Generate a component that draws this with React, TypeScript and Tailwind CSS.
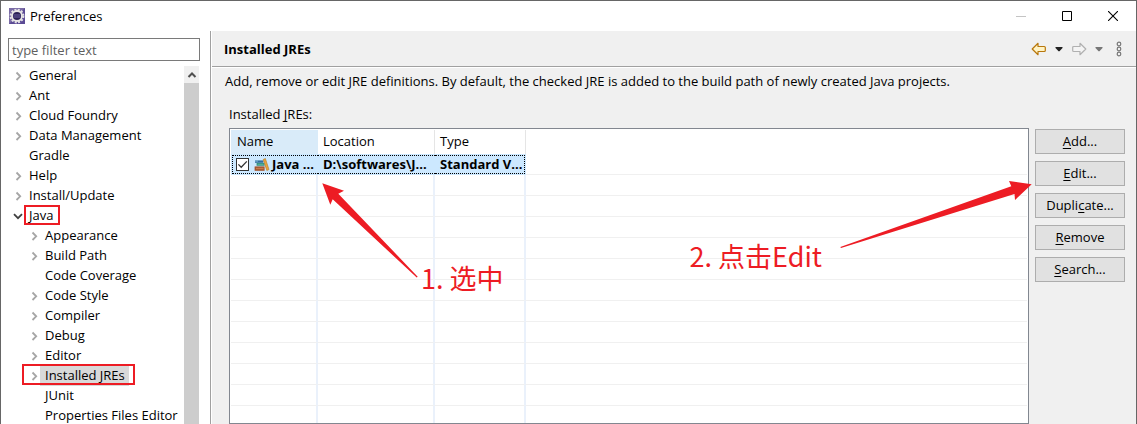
import { useState } from "react";

type Node = {
  label: string;
  level: 0 | 1;
  state: "closed" | "open" | "leaf";
  mark?: "java" | "jres";
};

const NODES: Node[] = [
  { label: "General", level: 0, state: "closed" },
  { label: "Ant", level: 0, state: "closed" },
  { label: "Cloud Foundry", level: 0, state: "closed" },
  { label: "Data Management", level: 0, state: "closed" },
  { label: "Gradle", level: 0, state: "leaf" },
  { label: "Help", level: 0, state: "closed" },
  { label: "Install/Update", level: 0, state: "closed" },
  { label: "Java", level: 0, state: "open", mark: "java" },
  { label: "Appearance", level: 1, state: "closed" },
  { label: "Build Path", level: 1, state: "closed" },
  { label: "Code Coverage", level: 1, state: "leaf" },
  { label: "Code Style", level: 1, state: "closed" },
  { label: "Compiler", level: 1, state: "closed" },
  { label: "Debug", level: 1, state: "closed" },
  { label: "Editor", level: 1, state: "closed" },
  { label: "Installed JREs", level: 1, state: "closed", mark: "jres" },
  { label: "JUnit", level: 1, state: "leaf" },
  { label: "Properties Files Editor", level: 1, state: "leaf" },
];

const BUTTONS = [
  ["", "A", "dd..."],
  ["", "E", "dit..."],
  ["Dupli", "c", "ate..."],
  ["", "R", "emove"],
  ["", "S", "earch..."],
];

const EMPTY_ROWS = Array.from({ length: 13 }, (_, i) => i);

function AppIcon() {
  return (
    <svg width="16" height="16" viewBox="0 0 16 16" aria-hidden="true">
      <rect width="16" height="16" fill="#5b4a94" />
      <path d="M0 0h16L0 16z" fill="#7b6ca6" />
      <circle cx="8" cy="8" r="6.4" fill="none" stroke="#e4e2e6" strokeWidth="2" strokeDasharray="2 1.35" />
      <circle cx="8" cy="8" r="5" fill="#2c2255" stroke="#e9e7e4" strokeWidth="1.8" />
      <path d="M4.4 7h7.2M4.4 9h7.2" stroke="#6a60a0" strokeWidth="1" />
    </svg>
  );
}

function Twisty({ state }: { state: Node["state"] }) {
  return (
    <svg className="shrink-0" width="12" height="12" viewBox="0 0 12 12" fill="none" aria-hidden="true">
      {state === "closed" && <path d="M4.5 2.5L8.2 6.3L4.5 10" stroke="#a6a6a6" strokeWidth="1.8" />}
      {state === "open" && <path d="M2 4.2L6 8.2L10 4.2" stroke="#404040" strokeWidth="1.8" />}
    </svg>
  );
}

function BooksIcon() {
  return (
    <svg className="shrink-0" width="16" height="14" viewBox="0 0 16 14" aria-hidden="true">
      <path d="M1 2.4h8.4v2.4H1z" fill="#2f6f9f" />
      <path d="M1 2.4h3v1.2H1z" fill="#7db4d4" />
      <path d="M2.6 5h8v2.8h-8z" fill="#2f8f7c" />
      <path d="M3.6 5.8h6v1h-6z" fill="#5fb8a0" />
      <path d="M.6 8.4h10v4.4H.6z" fill="#a0552f" />
      <path d="M2 9.8h7.6v1.4H2z" fill="#c87c4c" />
      <path d="M9.2 1.4l2.2-.8 3.6 11-2.2.9z" fill="#e8a640" stroke="#b87820" strokeWidth=".6" />
    </svg>
  );
}

function BackIcon() {
  return (
    <svg width="16" height="16" viewBox="0 0 16 16" aria-hidden="true">
      <path d="M1.2 8L7 2.3v3.2h6.3q1 0 1 1v3q0 1-1 1H7v3.2z" fill="#fff3c4" stroke="#b8770c" strokeWidth="1.2" strokeLinejoin="round" />
    </svg>
  );
}

function ForwardIcon() {
  return (
    <svg width="16" height="16" viewBox="0 0 16 16" aria-hidden="true">
      <path d="M14.8 8L9 2.3v3.2H2.7q-1 0-1 1v3q0 1 1 1H9v3.2z" fill="#f4f4f4" stroke="#b0b0b0" strokeWidth="1.2" strokeLinejoin="round" />
    </svg>
  );
}

function Caret({ className }: { className: string }) {
  return (
    <svg className={className} width="8" height="16" viewBox="0 0 8 16" aria-hidden="true">
      <path d="M0.5 6h7v1L4.5 10.2h-1L.5 7z" fill="currentColor" />
    </svg>
  );
}

function TreeRow({ node }: { node: Node }) {
  return (
    <li
      role="treeitem"
      aria-expanded={node.state === "leaf" ? undefined : node.state === "open"}
      aria-selected={node.mark === "jres"}
      className={`relative flex h-5 items-center ${node.level === 1 ? "pl-5" : "pl-1"}`}
    >
      <Twisty state={node.state} />
      <span className={`h-5 pr-1 pl-[5px] leading-[18px] whitespace-nowrap ${node.mark === "jres" ? "bg-[#d9d9d9]" : ""}`}>
        {node.label}
      </span>
      {node.mark === "java" && <span className="absolute -top-px left-4 h-5 w-9 border-2 border-[#ed1c24]" />}
      {node.mark === "jres" && <span className="absolute -top-0.5 left-3.5 h-[21px] w-[113px] border-2 border-[#ed1c24]" />}
    </li>
  );
}

function Sidebar() {
  return (
    <aside className="flex w-[210px] shrink-0 flex-col border-r border-[#a0a0a0] pt-[7px] pr-2.5 pl-[7px]">
      <input
        aria-label="Filter preferences"
        placeholder="type filter text"
        className="h-[23px] w-full shrink-0 border border-[#7a7a7a] bg-white px-[3px] leading-5 outline-none placeholder:text-[#5f5f5f]"
      />
      <div className="mt-[5px] flex min-h-0 flex-1 overflow-hidden">
        <ul role="tree" aria-label="Preference pages" className="min-w-0 flex-1">
          {NODES.map((n) => (
            <TreeRow key={n.label} node={n} />
          ))}
        </ul>
        <div className="flex w-4 shrink-0 flex-col pr-px">
          <button type="button" aria-label="Scroll up" className="flex h-[17px] shrink-0 items-center justify-center bg-[#f0f0f0]">
            <svg width="10" height="8" viewBox="0 0 10 8" fill="none" aria-hidden="true">
              <path d="M1.5 6L5 2.5L8.5 6" stroke="#505050" strokeWidth="2" />
            </svg>
          </button>
          <div className="flex-1 bg-[#cdcdcd]" />
        </div>
      </div>
    </aside>
  );
}

function JreTable() {
  const [checked, setChecked] = useState(true);
  return (
    <div className="h-full overflow-hidden border border-[#828790] bg-white p-px">
      <table className="w-full table-fixed border-separate border-spacing-0 text-left" aria-labelledby="jres-label">
        <colgroup>
          <col className="w-[87px]" />
          <col className="w-[117px]" />
          <col className="w-[91px]" />
          <col />
        </colgroup>
        <thead>
          <tr className="h-6 leading-[18px]">
            <th className="bg-[#d9ebf9] p-0 pb-0.5 pl-1.5 font-normal">Name</th>
            <th className="border-r border-[#e5e5e5] p-0 pb-0.5 pl-[5px] font-normal">Location</th>
            <th className="border-r border-[#e5e5e5] p-0 pb-0.5 pl-[5px] font-normal">Type</th>
            <th className="p-0" />
          </tr>
        </thead>
        <tbody>
          <tr className="h-[21px] leading-[18px] font-bold">
            <td className="bg-[#cce8ff] p-0 pl-px">
              <div className="flex h-[19px] items-center border-y border-l border-dotted border-black pl-[3px]">
                <span className="relative flex">
                  <input
                    type="checkbox"
                    aria-label="Java"
                    checked={checked}
                    onChange={(e) => setChecked(e.target.checked)}
                    className="h-[13px] w-[13px] appearance-none border border-[#333333] bg-white"
                  />
                  {checked && (
                    <svg className="pointer-events-none absolute inset-0" width="13" height="13" viewBox="0 0 13 13" fill="none" aria-hidden="true">
                      <path d="M2.4 6.4L5.2 9.2L10.8 3.4" stroke="#333" strokeWidth="1.3" />
                    </svg>
                  )}
                </span>
                <span className="ml-[5px] flex">
                  <BooksIcon />
                </span>
                <span className="ml-0.5 pb-0.5 whitespace-nowrap">Java ...</span>
              </div>
            </td>
            <td className="bg-[#cce8ff] p-0">
              <div className="flex h-[19px] items-center border-y border-dotted border-black pb-0.5 pl-[5px] whitespace-nowrap">D:\softwares\J...</div>
            </td>
            <td className="bg-[#cce8ff] p-0 pr-px">
              <div className="flex h-[19px] items-center border-y border-r border-dotted border-black pb-0.5 pl-[5px] whitespace-nowrap">Standard V...</div>
            </td>
            <td className="border-b border-[#f0f0f0] p-0" />
          </tr>
          {EMPTY_ROWS.map((i) => (
            <tr key={i} className="h-[21px]">
              <td className="border-r-2 border-b border-r-[#eaf1fb] border-b-[#f0f0f0] p-0" />
              <td className="border-r-2 border-b border-r-[#eaf1fb] border-b-[#f0f0f0] p-0" />
              <td className="border-r-2 border-b border-r-[#eaf1fb] border-b-[#f0f0f0] p-0" />
              <td className="border-b border-[#f0f0f0] p-0" />
            </tr>
          ))}
        </tbody>
      </table>
    </div>
  );
}

function Annotations() {
  return (
    <div className="pointer-events-none absolute inset-0 font-['Noto_Sans_CJK_SC',sans-serif] text-[27px] leading-8 whitespace-nowrap text-[#ed1c24]">
      <svg className="absolute top-[52px] left-[90px]" width="102" height="100" viewBox="0 0 102 100" aria-hidden="true">
        <path d="M3.3 3.3L25 10.7L19.3 13.7L98.7 96.7L97.7 97.5L13.7 19.3L11.3 24.7z" fill="currentColor" />
      </svg>
      <span className="absolute top-[134px] left-[192px]">1. 选中</span>
      <svg className="absolute top-[50px] -right-1" width="195" height="72" viewBox="0 0 195 72" aria-hidden="true">
        <path d="M193.7 6.3L171 3L173.3 8.3L2.3 69L3 69.9L176.5 16L177 22z" fill="currentColor" />
      </svg>
      <span className="absolute top-28 right-[207px]">2. 点击Edit</span>
    </div>
  );
}

export default function App() {
  return (
    <div className="flex h-screen flex-col overflow-hidden border-x border-t border-[#666666] bg-white font-['Open_Sans','Noto_Sans_CJK_SC',sans-serif] text-[13px] leading-5 text-black">
      <header className="flex h-[30px] shrink-0 items-center pl-2">
        <AppIcon />
        <h1 className="ml-[5px] flex-1">Preferences</h1>
        <button type="button" aria-label="Minimize" className="flex h-full w-[46px] items-center justify-center">
          <svg width="10" height="10" viewBox="0 0 10 10" aria-hidden="true">
            <path d="M0 5.5h10" stroke="#c4c4c4" />
          </svg>
        </button>
        <button type="button" aria-label="Maximize" className="flex h-full w-[46px] items-center justify-center">
          <svg width="10" height="10" viewBox="0 0 10 10" fill="none" aria-hidden="true">
            <path d="M.5 .5h9v9h-9z" stroke="#000" />
          </svg>
        </button>
        <button type="button" aria-label="Close" className="flex h-full w-[46px] items-center justify-center">
          <svg width="10" height="10" viewBox="0 0 10 10" aria-hidden="true">
            <path d="M0 0L10 10M10 0L0 10" stroke="#000" strokeWidth="1.1" />
          </svg>
        </button>
      </header>

      <div className="flex min-h-0 flex-1">
        <Sidebar />
        <main className="flex min-w-0 flex-1 flex-col border-l border-white bg-[#f0f0f0]">
          <div className="flex h-9 shrink-0 items-center border-b border-[#a0a0a0] pr-[13px] pl-3">
            <h2 className="flex-1 font-bold">Installed JREs</h2>
            <div className="flex items-center">
              <button type="button" aria-label="Back"><BackIcon /></button>
              <button type="button" aria-label="Back history" className="ml-2"><Caret className="text-[#222222]" /></button>
              <button type="button" aria-label="Forward" className="ml-2"><ForwardIcon /></button>
              <button type="button" aria-label="Forward history" className="ml-2"><Caret className="text-[#777777]" /></button>
              <button type="button" aria-label="More options" className="ml-3">
                <svg width="8" height="16" viewBox="0 0 8 16" fill="none" aria-hidden="true">
                  <g stroke="#777" strokeWidth="1.2">
                    <circle cx="4" cy="3" r="1.8" />
                    <circle cx="4" cy="8" r="1.8" />
                    <circle cx="4" cy="13" r="1.8" />
                  </g>
                </svg>
              </button>
            </div>
          </div>
          <div className="flex min-h-0 flex-1 flex-col border-t border-white pt-1 pr-[11px] pl-[13px]">
            <p className="h-5 shrink-0 leading-[18px] whitespace-nowrap">
              Add, remove or edit JRE definitions. By default, the checked JRE is added to the build path of newly created Java projects.
            </p>
            <div className="mt-3 flex min-h-0 flex-1 flex-col pl-1">
              <p id="jres-label" className="mb-1 shrink-0">
                Installed <span className="underline underline-offset-2">J</span>REs:
              </p>
              <div className="flex min-h-0 flex-1 gap-1.5">
                <div className="relative min-w-0 flex-1">
                  <JreTable />
                  <Annotations />
                </div>
                <div className="flex w-[90px] shrink-0 flex-col gap-[7px] pt-px">
                  {BUTTONS.map(([before, key, after]) => (
                    <button
                      key={key}
                      type="button"
                      className="h-[25px] shrink-0 border border-[#adadad] bg-[#e1e1e1] pb-0.5 whitespace-nowrap"
                    >
                      {before}
                      <span className="underline underline-offset-2">{key}</span>
                      {after}
                    </button>
                  ))}
                </div>
              </div>
            </div>
          </div>
        </main>
      </div>
    </div>
  );
}
